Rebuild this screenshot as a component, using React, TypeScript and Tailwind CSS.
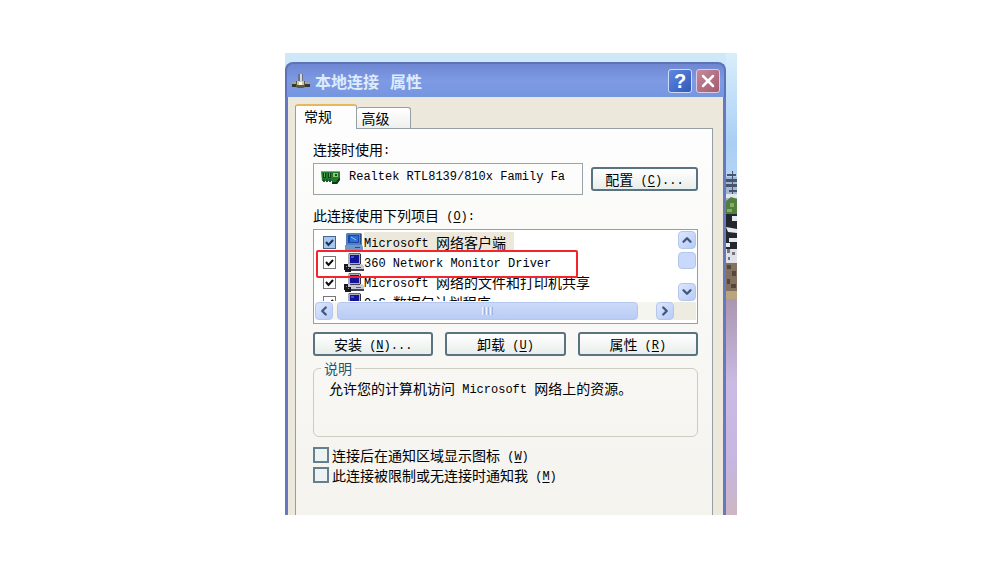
import { ChevronDown, ChevronLeft, ChevronRight, ChevronUp, X } from "lucide-react";
import type { ReactNode } from "react";

const items = [
  { cjk: "网络客户端", latin: "Microsoft ", client: true },
  { cjk: "", latin: "360 Network Monitor Driver", client: false },
  { cjk: "网络的文件和打印机共享", latin: "Microsoft ", client: false },
  { cjk: "数据包计划程序", latin: "QoS ", client: false },
];

// Latin text is set half as wide as the Chinese glyphs
const Latin = ({ children }: { children: ReactNode }) => (
  <span className="align-[1px] font-['Liberation_Mono',monospace] text-[12px] leading-4 whitespace-pre">
    {children}
  </span>
);

const Key = ({ letter }: { letter: string }) => (
  <Latin>
    {" "}(<span className="underline underline-offset-2">{letter}</span>)
  </Latin>
);

const ConnectionIcon = () => (
  <svg viewBox="0 0 20 16" className="h-4 w-5 shrink-0" aria-hidden="true">
    <path d="M7 1h5v8H7z" fill="#6a7194" />
    <path d="M9 1h2v8H9z" fill="#d8dad0" />
    <path d="M1 10h5v4H1zM14 10h5v4h-5z" fill="#35363a" />
    <path d="M1 9h5v2H1zM14 9h5v2h-5z" fill="#a3a598" />
    <path d="M5 8h9v6l-2 1H7l-2-1z" fill="#5b593e" />
    <path d="M6 8h7v4H6z" fill="#cfc8a4" />
    <path d="M8 9h3v3H8z" fill="#fffde8" />
  </svg>
);

const CardIcon = () => (
  <svg viewBox="0 0 20 14" className="h-3.5 w-5 shrink-0" aria-hidden="true">
    <path d="M0 1h19v8l-3 5h-5v-3H1z" fill="#237a2f" />
    <path d="M0 1h19v1H0z" fill="#70bd62" />
    <path d="M2 3h3v5H2zM7 3h3v5H7z" fill="#123f20" />
    <path d="M3 3h1v4H3zM8 3h1v4H8z" fill="#5ba956" />
    <path d="M12 3h5v4h-5z" fill="#8ac878" />
    <path d="M14 4h2v2h-2z" fill="#1a5124" />
    <path d="M2 9h2v3H2zM5 9h2v3H5zM8 9h2v3H8z" fill="#1c5a2b" />
    <path d="M11 12h4l3-4h1v2l-3 4h-5z" fill="#0d3518" />
  </svg>
);

const ComputerIcon = ({ client }: { client: boolean }) =>
  client ? (
    <svg viewBox="0 0 20 20" className="size-5 shrink-0" aria-hidden="true">
      <path d="M3 1h14l1 1v11H2V2z" fill="#5581bd" />
      <path d="M4 3h11v8H4z" fill="#1c47a5" />
      <path d="M6 4h8v6H6z" fill="#2f70d8" />
      <path d="M7 5l5 3" stroke="#8fc3f5" />
      <path d="M16 2h1v10h-1z" fill="#2d4f87" />
      <path d="M1 13h17l1 2v4H1z" fill="#6d98cd" />
      <path d="M1 18h18v1H1z" fill="#2c4d83" />
      <path d="M11 15h5v1h-5z" fill="#284c86" />
    </svg>
  ) : (
    <svg viewBox="0 0 20 20" className="size-5 shrink-0" aria-hidden="true">
      <path d="M5 1h11l1 1v10H4V2z" fill="#a9aaba" />
      <path d="M5 1h11v1H5z" fill="#66687c" />
      <path d="M6 3h9v8H6z" fill="#14149a" />
      <path d="M7 4h3v2H7z" fill="#4956d4" />
      <path d="M16 2h1v10h-1z" fill="#34343f" />
      <path d="M4 12h14l2 2v4H4z" fill="#c9c9d6" />
      <path d="M5 17h15v2H5zM6 12h10v1H6z" fill="#43434f" />
      <path d="M12 15h5v1h-5z" fill="#62626e" />
      <path d="M0 12h4v3h3v5H1v-2H0z" fill="#17171f" />
      <path d="M2 14h1v1H2zM4 16h1v1H4z" fill="#8b8b98" />
    </svg>
  );

const ScrollButton = ({ label, children }: { label: string; children: ReactNode }) => (
  <button
    aria-label={label}
    className="flex h-[18px] w-[18px] shrink-0 items-center justify-center rounded-sm border border-[#b4c6ee] bg-linear-to-br from-[#dce7fe] to-[#b7cbf6] text-[#40587f]"
  >
    {children}
  </button>
);

const PushButton = ({ label, letter, dots }: { label: string; letter: string; dots?: boolean }) => (
  <button className="h-6 flex-1 rounded-[3px] border-2 border-[#5a7380] bg-linear-to-b from-white to-[#e9eeea] pb-px text-[14px] leading-5 whitespace-nowrap">
    {label}
    <Key letter={letter} />
    {dots && <Latin>...</Latin>}
  </button>
);

const OptionBox = ({ label, letter }: { label: string; letter: string }) => (
  <label className="flex h-5 items-center gap-[3px] whitespace-nowrap">
    <input
      type="checkbox"
      className="size-4 shrink-0 appearance-none border-2 border-[#64808c] bg-[#edf3f3]"
    />
    <span>
      {label}
      <Key letter={letter} />
    </span>
  </label>
);

const ItemRow = ({ item }: { item: (typeof items)[number] }) => (
  <li>
    <label className="flex h-5 items-center whitespace-nowrap">
      <span className="mr-2 grid">
        <input
          type="checkbox"
          defaultChecked
          className={
            item.client
              ? "col-start-1 row-start-1 size-[13px] appearance-none border border-[#46658e] bg-[#a9c6ec]"
              : "col-start-1 row-start-1 size-[13px] appearance-none border border-[#777] bg-white"
          }
        />
        <svg
          viewBox="0 0 13 13"
          className="pointer-events-none col-start-1 row-start-1 size-[13px]"
          aria-hidden="true"
        >
          <path
            d="M3 6l2.5 3L10 4"
            fill="none"
            stroke={item.client ? "#17345f" : "#111"}
            strokeWidth="2"
          />
        </svg>
      </span>
      <ComputerIcon client={item.client} />
      <span className={item.client ? "bg-[#ece9dc] pr-2 leading-5" : "leading-5"}>
        <Latin>{item.latin}</Latin>
        {item.cjk}
      </span>
    </label>
  </li>
);

// Strip of wallpaper that shows to the right of the window
const Wallpaper = () => (
  <svg
    viewBox="0 0 11 462"
    preserveAspectRatio="none"
    className="w-[11px] shrink-0 self-stretch"
    aria-hidden="true"
  >
    <defs>
      <linearGradient id="sky" x1="0" y1="0" x2="0" y2="1">
        <stop offset="0" stopColor="#d9eefb" />
        <stop offset="0.6" stopColor="#a9cff5" />
        <stop offset="1" stopColor="#bcd6f3" />
      </linearGradient>
      <linearGradient id="ground" x1="0" y1="0" x2="0" y2="1">
        <stop offset="0" stopColor="#a995ad" />
        <stop offset="0.4" stopColor="#cbbbe4" />
        <stop offset="0.75" stopColor="#c6b6e0" />
        <stop offset="1" stopColor="#cdb6c4" />
      </linearGradient>
    </defs>
    <path d="M0 0h11v150H0z" fill="url(#sky)" />
    <path d="M0 244h11v218H0z" fill="url(#ground)" />
    <path d="M0 124h11v26H0z" fill="#a3b6d2" />
    <path d="M1 121h9v2H1zM0 126h11v3H0zM0 131h11v3H0zM3 137h8v2H3zM6 118h1v24H6z" fill="#47566e" />
    <path d="M0 141h11v4H0z" fill="#dfe6ec" />
    <path d="M0 148l5-4 6 2v17H0z" fill="#527f3c" />
    <path d="M4 150h4v4H4zM1 156h5v3H1z" fill="#86ad66" />
    <path d="M0 161h11v37H0z" fill="#24272e" />
    <path d="M6 163h5v5H6zM0 174l11 2v4l-9-1zM3 185h8v4H3zM0 190h4v4H0z" fill="#e6eaf0" />
    <path d="M0 196h11v14H0z" fill="#e0e0e8" />
    <path d="M1 196h3v4H1zM6 199h3v3H6zM2 204h2v3H2z" fill="#77757a" />
    <path d="M0 210h11v28H0z" fill="#83705e" />
    <path d="M1 212h4v4H1zM6 218h4v5H6zM1 226h3v5H1zM5 231h5v4H5z" fill="#54463c" />
    <path d="M0 238h11v8H0z" fill="#b9a47f" />
  </svg>
);

export default function App() {
  return (
    <main className="min-h-screen bg-white pt-[53px] font-['Noto_Sans_CJK_SC',sans-serif] text-[14px] leading-5 text-black">
      <div className="ml-[28.5%] flex w-full max-w-[452px] bg-[#cfe8f8]">
        <section className="min-w-0 flex-1 pt-[9px]">
          <header className="flex h-[35px] items-center rounded-t-lg border-2 border-b-0 border-[#5c73b8] bg-linear-to-b from-[#6f87d2] via-[#7e9ae4] to-[#7597df] pr-1 pl-1">
            <ConnectionIcon />
            <h1 className="ml-1 flex-1 text-[16px] font-bold text-[#deecfa]">
              本地连接 &nbsp;&nbsp;属性
            </h1>
            <div className="flex gap-1">
              <button
                aria-label="帮助"
                className="flex size-6 items-center justify-center rounded-[3px] border border-[#cfdcf8] bg-linear-to-br from-[#5f88e2] to-[#3159b8] font-['Liberation_Sans',sans-serif] text-[20px] font-bold text-white"
              >
                ?
              </button>
              <button
                aria-label="关闭"
                className="flex size-6 items-center justify-center rounded-[3px] border border-[#dccbe2] bg-linear-to-br from-[#c48a9c] to-[#a45a6d] text-white"
              >
                <X size={20} strokeWidth={3} />
              </button>
            </div>
          </header>

          <div className="border-x-3 border-[#6678be] bg-[#ece9dc] pt-[7px] pr-[10px] pl-[7px]">
            <div role="tablist" className="flex items-end">
              <button
                role="tab"
                aria-selected="true"
                className="-mb-px h-[25px] w-[62px] rounded-t-[3px] border-x border-t-2 border-x-[#96a0a4] border-t-[#e8b65c] bg-[#fdfdfd] pr-4 pb-1"
              >
                常规
              </button>
              <button
                role="tab"
                aria-selected="false"
                className="h-[21px] w-[54px] rounded-t-[3px] border-t border-r border-[#96a0a4] bg-linear-to-b from-white to-[#eef0ee] pr-4"
              >
                高级
              </button>
            </div>

            <div
              role="tabpanel"
              className="border-x border-t border-[#96a0a4] bg-linear-to-b from-[#fdfdfd] to-[#f4f3ee] pt-[10px] pr-[14px] pb-[30px] pl-[17px]"
            >
              <label htmlFor="adapter" className="block">
                连接时使用<Latin>:</Latin>
              </label>
              <div className="mt-1 flex items-center gap-2">
                <div className="flex h-8 min-w-0 flex-1 items-center border border-[#9aa3a8] pr-4 pb-1 pl-[7px]">
                  <CardIcon />
                  <input
                    id="adapter"
                    readOnly
                    value="Realtek RTL8139/810x Family Fa"
                    className="ml-2 min-w-0 flex-1 bg-transparent font-['Liberation_Mono',monospace] text-[12px] outline-none"
                  />
                </div>
                <div className="flex w-[107px]">
                  <PushButton label="配置" letter="C" dots />
                </div>
              </div>

              <h2 className="mt-[10px]">
                此连接使用下列项目
                <Key letter="O" />
                <Latin>:</Latin>
              </h2>
              <div className="relative mt-1 border border-[#8fa1ab] bg-white px-px pt-px pb-[3px]">
                <div className="flex h-[70px]">
                  <ul className="min-w-0 flex-1 overflow-hidden pt-px pl-2">
                    {items.map((item) => (
                      <ItemRow key={item.latin + item.cjk} item={item} />
                    ))}
                  </ul>
                  <div className="flex flex-col justify-between">
                    <ScrollButton label="向上滚动">
                      <ChevronUp size={14} strokeWidth={4} />
                    </ScrollButton>
                    <div className="mb-3 h-[17px] w-[18px] rounded-sm border border-[#b4c6ee] bg-[#c9d9fb]" />
                    <ScrollButton label="向下滚动">
                      <ChevronDown size={14} strokeWidth={4} />
                    </ScrollButton>
                  </div>
                </div>
                <div className="mt-px flex bg-[#f5f5f0]">
                  <ScrollButton label="向左滚动">
                    <ChevronLeft size={14} strokeWidth={4} />
                  </ScrollButton>
                  <div className="ml-1 flex h-[18px] flex-1 items-center justify-center gap-px rounded-sm border border-[#b4c6ee] bg-linear-to-b from-[#cbdafa] to-[#b9ccf4]">
                    <span className="h-2 w-px bg-[#eef4fe]" />
                    <span className="h-2 w-px bg-[#9db4e2]" />
                    <span className="h-2 w-px bg-[#eef4fe]" />
                    <span className="h-2 w-px bg-[#9db4e2]" />
                    <span className="h-2 w-px bg-[#eef4fe]" />
                    <span className="h-2 w-px bg-[#9db4e2]" />
                  </div>
                  <div className="ml-[18px]">
                    <ScrollButton label="向右滚动">
                      <ChevronRight size={14} strokeWidth={4} />
                    </ScrollButton>
                  </div>
                  <div className="w-[22px] bg-[#eeece0]" />
                </div>
                <div className="pointer-events-none absolute top-5 left-[2px] h-7 w-[262px] rounded-[2px] border-2 border-[#f5232a]" />
              </div>

              <div className="mt-2 flex gap-3">
                <PushButton label="安装" letter="N" dots />
                <PushButton label="卸载" letter="U" />
                <PushButton label="属性" letter="R" />
              </div>

              <fieldset className="mt-[2px] h-[79px] rounded-md border border-[#cdcdbf] pl-[15px]">
                <legend className="-ml-2 px-[3px] text-[#24566c]">说明</legend>
                <p>
                  允许您的计算机访问<Latin> Microsoft </Latin>网络上的资源。
                </p>
              </fieldset>

              <div className="mt-2">
                <OptionBox label="连接后在通知区域显示图标" letter="W" />
                <OptionBox label="此连接被限制或无连接时通知我" letter="M" />
              </div>
            </div>
          </div>
        </section>
        <Wallpaper />
      </div>
    </main>
  );
}
